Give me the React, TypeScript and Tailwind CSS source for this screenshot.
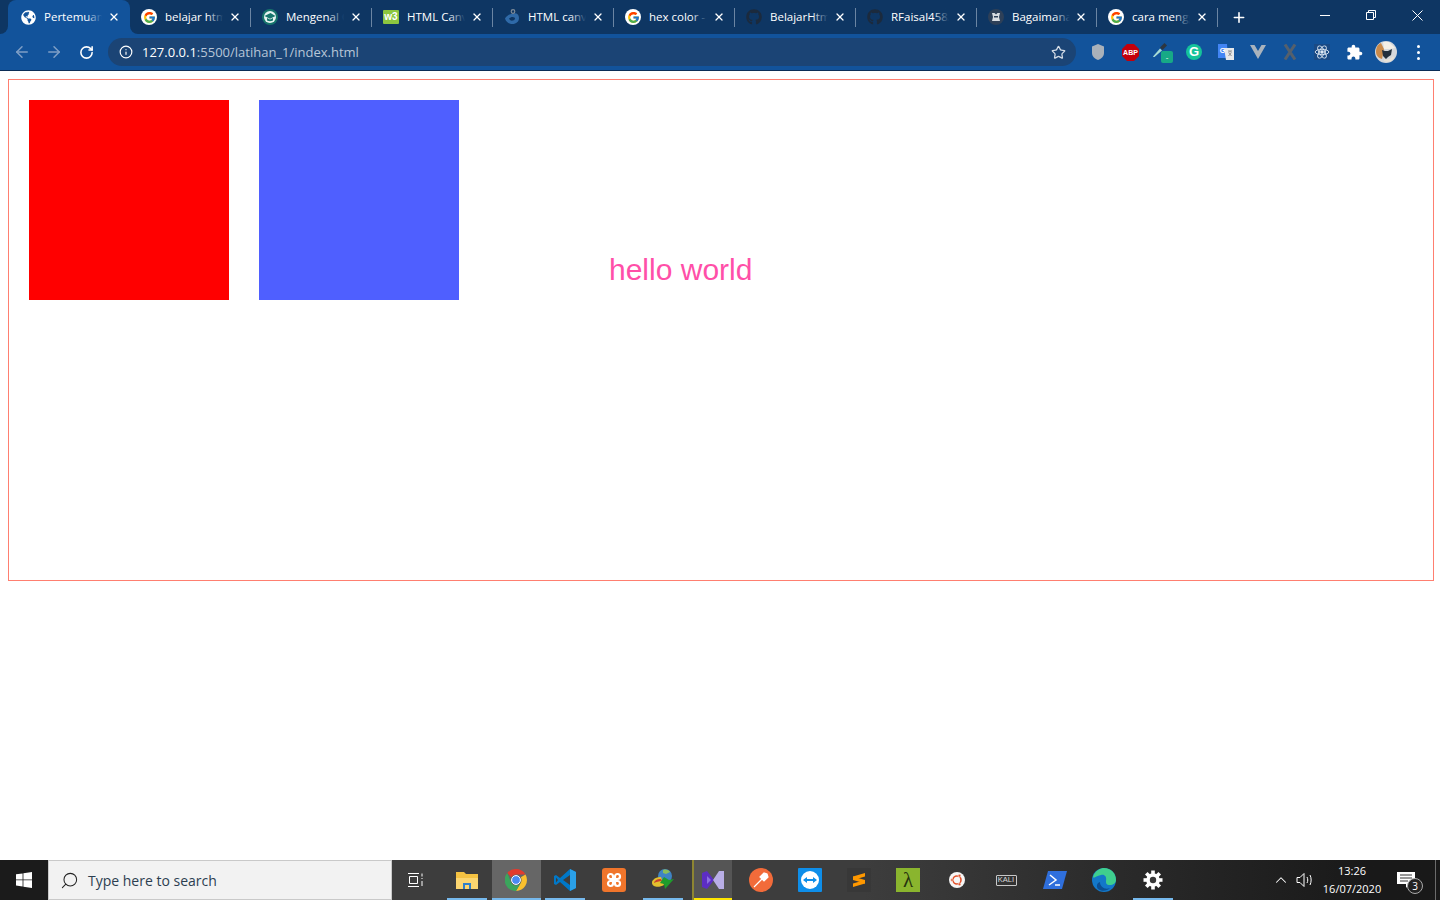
import type { ReactNode } from "react";
import { ArrowLeft, ArrowRight, ChevronUp, Info, Plus, RotateCw, Search, Star, X } from "lucide-react";
import { FcGoogle } from "react-icons/fc";
import { FaGithub, FaGlobeAmericas } from "react-icons/fa";

const uiFont = "font-['Open_Sans','Noto_Sans',sans-serif]";

function W3Icon() {
  return (
    <div className="flex h-[14px] w-4 items-center justify-center rounded-[1px] bg-[#8cc63f] font-['Liberation_Sans',sans-serif] text-[10px] leading-none font-bold text-white">
      w3
    </div>
  );
}

function GradIcon() {
  return (
    <svg width="16" height="16" viewBox="0 0 16 16">
      <circle cx="8" cy="8" r="8" fill="#17756c" />
      <circle cx="8" cy="8" r="6" fill="#e8f4f2" />
      <path d="M2.500 7 8.500 4 13.500 7 8 9.800z" fill="#17756c" />
      <path d="M5 9v2.400c1.900 1.100 4 1.100 6 0V9L8 10.600z" fill="#17756c" />
    </svg>
  );
}

function DrupalIcon() {
  return (
    <svg width="16" height="16" viewBox="0 0 16 16">
      <path d="M1 9.500C3 6 7 4.500 10.500 4.200 13 4 15 6 15 9c0 3.500-3 6-6.500 6S2 13 1 9.500z" fill="#2f6aa8" />
      <path d="M5 9.500c1.500-1.600 4-2 5.500-1 1 .8.5 2.500-1.500 3S5.500 11 5 9.500z" fill="#0e3663" />
      <circle cx="9" cy="2.500" r="1.800" fill="none" stroke="#7f8c99" strokeWidth="1.200" />
    </svg>
  );
}

function BearIcon() {
  return (
    <svg width="16" height="16" viewBox="0 0 16 16">
      <circle cx="8" cy="8" r="8" fill="#2e4058" />
      <path d="M4 4h2.500L8 5.500 9.500 4H12l-1 4 1 4H4l1-4z" fill="#d9dde2" />
      <rect x="6" y="7" width="4" height="1.500" fill="#2e4058" />
    </svg>
  );
}

function GoogleFav() {
  return (
    <div className="flex h-4 w-4 items-center justify-center rounded-full bg-white">
      <FcGoogle size={13} />
    </div>
  );
}

const tabs: { title: string; icon: ReactNode; narrow?: boolean }[] = [
  { title: "Pertemuan 2", icon: <FaGlobeAmericas size={15} color="#fff" /> },
  { title: "belajar html", icon: <GoogleFav /> },
  { title: "Mengenal Ca", icon: <GradIcon /> },
  { title: "HTML Canvas", icon: <W3Icon /> },
  { title: "HTML canvas", icon: <DrupalIcon /> },
  { title: "hex color - G", icon: <GoogleFav /> },
  { title: "BelajarHtml", icon: <FaGithub size={16} color="#1b2a3d" /> },
  { title: "RFaisal458/", icon: <FaGithub size={16} color="#1b2a3d" /> },
  { title: "Bagaimana", icon: <BearIcon />, narrow: true },
  { title: "cara mengg", icon: <GoogleFav /> },
];

function Tab({ title, icon, active, divider, narrow }: { title: string; icon: ReactNode; active: boolean; divider: boolean; narrow?: boolean }) {
  return (
    <div className={`relative flex h-[34px] shrink-0 items-center pl-3 ${active ? "-mr-px w-[122px] rounded-t-lg bg-[#12539b]" : narrow ? "w-[120px]" : "w-[121px]"}`}>
      {active && (
        <>
          <div className="absolute bottom-0 -left-2 h-2 w-2 bg-[#12539b]">
            <div className="h-2 w-2 rounded-br-lg bg-[#0e3663]" />
          </div>
          <div className="absolute -right-2 bottom-0 h-2 w-2 bg-[#12539b]">
            <div className="h-2 w-2 rounded-bl-lg bg-[#0e3663]" />
          </div>
        </>
      )}
      <div className="flex w-4 shrink-0 justify-center">{icon}</div>
      <div className="relative ml-2 w-[58px] overflow-hidden text-[11.5px] whitespace-nowrap text-white">
        {title}
        <div className={`absolute inset-y-0 right-0 w-4 bg-gradient-to-r from-transparent ${active ? "to-[#12539b]" : "to-[#0e3663]"}`} />
      </div>
      <X size={12} strokeWidth={2.6} color="#fff" className={`${narrow ? "ml-[5px]" : "ml-1.5"} shrink-0`} />
      {divider && <div className="absolute top-2 -right-px h-[19px] w-px bg-[#6b85a3]" />}
    </div>
  );
}

function TitleBar() {
  return (
    <div className="flex h-[34px] items-start bg-[#0e3663] pl-2">
      {tabs.map((t, i) => (
        <Tab key={i} title={t.title} icon={t.icon} narrow={t.narrow} active={i === 0} divider={i > 0} />
      ))}
      <div className="ml-[14px] flex h-[34px] w-4 items-center justify-center">
        <Plus size={17} strokeWidth={2.4} color="#fff" />
      </div>
      <div className="ml-auto flex h-[30px] items-center">
        <div className="flex w-[46px] justify-center">
          <div className="h-px w-2.5 bg-white" />
        </div>
        <div className="flex w-[46px] justify-center">
          <svg width="10" height="10" viewBox="0 0 10 10" fill="none" stroke="#fff">
            <path d="M.5 2.500h7v7h-7zM2.500 2.500v-2h7v7h-2" />
          </svg>
        </div>
        <div className="flex w-[46px] justify-center">
          <svg width="11" height="11" viewBox="0 0 11 11" stroke="#fff">
            <path d="M.5.5l10 10M10.500.5l-10 10" />
          </svg>
        </div>
      </div>
    </div>
  );
}

function Ext({ children }: { children: ReactNode }) {
  return <div className="flex h-9 w-8 items-center justify-center">{children}</div>;
}

function ExtensionIcons() {
  return (
    <div className="flex">
      <Ext>
        <svg width="12" height="16" viewBox="0 0 12 16">
          <path d="M6 0l6 2.500V9c0 3.500-3 6-6 7-3-1-6-3.500-6-7V2.500z" fill="#a9b1ba" />
        </svg>
      </Ext>
      <Ext>
        <svg width="17" height="17" viewBox="0 0 17 17">
          <path d="M5 0h7l5 5v7l-5 5H5l-5-5V5z" fill="#c4000b" />
          <text x="8.500" y="11" textAnchor="middle" fontSize="7" fontWeight="700" fill="#fff" fontFamily="Liberation Sans">ABP</text>
        </svg>
      </Ext>
      <Ext>
        <div className="relative h-5 w-5">
          <svg width="16" height="16" viewBox="0 0 16 16" className="absolute top-0 left-0">
            <path d="M1.500 15 1 14.500 8 6.500 10 8.500 2.500 15z" fill="#a8dcd5" />
            <path d="M8 5.500 10.500 3 12.500 1 15 3.500 13 5.500 10.500 8z" fill="#2d3640" />
          </svg>
          <div className="absolute top-[9px] left-[9px] flex h-3 w-3 items-center justify-center rounded-[2px] bg-[#17a986] text-[8px] leading-none text-white">-</div>
        </div>
      </Ext>
      <Ext>
        <div className="flex h-4 w-4 items-center justify-center rounded-full bg-[#15c39a] font-['Liberation_Sans',sans-serif] text-[13px] font-bold text-white">G</div>
      </Ext>
      <Ext>
        <svg width="16" height="16" viewBox="0 0 16 16">
          <path d="M0 0h9l1 14H0z" fill="#4285f4" />
          <path d="M6 4h10v12H8z" fill="#e6e8ea" />
          <path d="M10 7h4M12 7v1.500M10.500 12l3-3.500M13.500 12l-3-3.500" stroke="#777" strokeWidth=".8" fill="none" />
          <text x="4.500" y="9" textAnchor="middle" fontSize="7" fontWeight="700" fill="#fff" fontFamily="Liberation Sans">G</text>
        </svg>
      </Ext>
      <Ext>
        <svg width="16" height="14" viewBox="0 0 16 14">
          <path d="M0 0h4.500L8 6l3.500-6H16L8 14z" fill="#a9b3bd" />
        </svg>
      </Ext>
      <Ext>
        <svg width="14" height="16" viewBox="0 0 14 16" stroke="#55606c" strokeWidth="3" fill="none">
          <path d="M2 .5l10 15M12 .5l-10 15" />
        </svg>
      </Ext>
      <Ext>
        <div className="flex h-4 w-4 items-center justify-center bg-[#1a4a85]">
          <svg width="16" height="16" viewBox="-8 -8 16 16" fill="none" stroke="#dfe8f2" strokeWidth=".9">
            <ellipse rx="6.800" ry="2.700" />
            <ellipse rx="6.800" ry="2.700" transform="rotate(60)" />
            <ellipse rx="6.800" ry="2.700" transform="rotate(120)" />
            <circle r="1.300" fill="#dfe8f2" />
          </svg>
        </div>
      </Ext>
      <Ext>
        <svg width="17" height="17" viewBox="0 0 24 24" fill="#fff">
          <path d="M20.500 11H19V7c0-1.100-.9-2-2-2h-4V3.500C13 2.120 11.880 1 10.500 1S8 2.120 8 3.500V5H4c-1.100 0-1.990.9-1.990 2v3.800H3.500c1.490 0 2.700 1.210 2.700 2.700s-1.210 2.700-2.700 2.700H2V20c0 1.100.9 2 2 2h3.800v-1.500c0-1.490 1.210-2.700 2.700-2.700 1.490 0 2.700 1.210 2.700 2.700V22H17c1.100 0 2-.9 2-2v-4h1.500c1.380 0 2.500-1.120 2.500-2.500S21.880 11 20.500 11z" />
        </svg>
      </Ext>
      <Ext>
        <svg width="22" height="22" viewBox="0 0 22 22">
          <circle cx="11" cy="11" r="11" fill="#d5d8dc" />
          <path d="M1 11C1 6 3 3 6 2l3 6-2 10C3 17 1 14 1 11z" fill="#c98a4a" />
          <path d="M8 1h6l6 6-5 1H9z" fill="#f4efe6" />
          <path d="M7 9l3 1h3l4-2-1 6-3 2-2 2-3-3z" fill="#23303d" />
          <path d="M9 18c2 1 6 1 9-3l1 2c-2 3-6 5-10 3z" fill="#e9e2d6" />
        </svg>
      </Ext>
      <Ext>
        <div className="flex flex-col gap-[3px]">
          <div className="h-[3px] w-[3px] rounded-full bg-white" />
          <div className="h-[3px] w-[3px] rounded-full bg-white" />
          <div className="h-[3px] w-[3px] rounded-full bg-white" />
        </div>
      </Ext>
    </div>
  );
}

function Toolbar() {
  return (
    <div className="flex h-[37px] items-start border-b border-[#0b2c55] bg-[#12539b] pl-1.5">
      <Ext>
        <ArrowLeft size={18} color="#7f9fc6" />
      </Ext>
      <Ext>
        <ArrowRight size={18} color="#7f9fc6" />
      </Ext>
      <Ext>
        <RotateCw size={15} strokeWidth={2.5} color="#fff" />
      </Ext>
      <div className="mt-1 ml-1.5 flex h-7 w-[968px] items-center rounded-full bg-[#1b4475] pl-[11px]">
        <Info size={14} color="#fff" />
        <div className="mt-px ml-[9px] text-[13px] text-[#b7c6d8]">
          <span className="text-white">127.0.0.1</span>:5500/latihan_1/index.html
        </div>
        <Star size={15} color="#d5dde7" className="mr-[10px] ml-auto" />
      </div>
      <div className="ml-1.5">
        <ExtensionIcons />
      </div>
    </div>
  );
}

function Canvas() {
  return (
    <div className="mt-2 mr-1.5 ml-2 flex h-[502px] items-start border border-[#ff7f70] p-5">
      <div className="h-[200px] w-[200px] bg-[#ff0000]" />
      <div className="ml-[30px] h-[200px] w-[200px] bg-[#4f5fff]" />
      <div className="mt-[148px] ml-[150px] font-['Liberation_Sans',sans-serif] text-[30px] leading-[44px] text-[#ff4fa8]">hello world</div>
    </div>
  );
}

function ChromeIcon() {
  return (
    <svg width="22" height="22" viewBox="0 0 22 22">
      <path d="M11 0a11 11 0 0 1 9.500 5.500H11a5.500 5.500 0 0 0-4.800 2.800L2.300 3.900A11 11 0 0 1 11 0z" fill="#e33b2e" />
      <path d="M20.500 5.500A11 11 0 0 1 11 22l4.800-8.200a5.500 5.500 0 0 0 0-5.600z" fill="#fbc02d" />
      <path d="M2.300 3.900 6.200 13.700A5.500 5.500 0 0 0 15.800 13.800L11 22A11 11 0 0 1 2.300 3.900z" fill="#3ba55c" />
      <circle cx="11" cy="11" r="4.400" fill="#4a8af4" stroke="#fff" strokeWidth="1" />
    </svg>
  );
}

function TaskItem({ children, line, active }: { children: ReactNode; line?: boolean; active?: boolean }) {
  return (
    <div className={`relative flex h-10 w-[49px] shrink-0 items-center justify-center ${active ? "bg-[#666666]" : ""}`}>
      {children}
      {line && <div className={`absolute bottom-0 h-0.5 bg-[#76b9ed] ${active ? "inset-x-0" : "w-10"}`} />}
    </div>
  );
}

function Taskbar() {
  return (
    <div className={`flex h-10 items-stretch bg-gradient-to-r from-[#3d3d3d] from-60% to-[#191919] to-95% ${uiFont}`}>
      <div className="flex w-12 items-center justify-center bg-[#1b1b1b]">
        <svg width="16" height="16" viewBox="0 0 16 16" fill="#fff">
          <path d="M0 2.300 6.600 1.400V7.500H0zM7.400 1.300 16 0V7.500H7.400zM0 8.300H6.600V14.500L0 13.600zM7.400 8.300H16V16L7.400 14.700z" />
        </svg>
      </div>
      <div className="flex w-[344px] items-center border border-[#c9c9c9] bg-[#f2f2f2] pl-[11px]">
        <Search size={19} strokeWidth={1.3} color="#222" className="-scale-x-100" />
        <span className="ml-[9px] text-[14px] text-[#2c3e50]">Type here to search</span>
      </div>
      <div className="flex w-[50.5px] items-center justify-center pr-0.5">
        <svg width="16" height="14" viewBox="0 0 16 14" fill="none" stroke="#fff">
          <path d="M0 .5h11M0 13.500h11M1.500 3.500h8v7h-8zM14 .5v3M14 5v1M14 8v5" />
        </svg>
      </div>
      <TaskItem line>
        <svg width="22" height="20" viewBox="0 0 22 20">
          <path d="M0 2h8l2 2h12v14H0z" fill="#f5c242" />
          <path d="M0 8h22v11H0z" fill="#fcd670" />
          <path d="M7 13h8v6H7z" fill="#2f7fc9" />
          <path d="M9 15h4v4H9z" fill="#fcd670" />
        </svg>
      </TaskItem>
      <TaskItem line active>
        <ChromeIcon />
      </TaskItem>
      <TaskItem line>
        <svg width="24" height="24" viewBox="0 0 24 24">
          <path d="M17 1l6 3v16l-6 3L7 14l-4 3-2-1v-8l2-1 4 3z" fill="#0078c8" />
          <path d="M17 1l6 3v16l-6 3z" fill="#2aa0e8" />
          <path d="M17 7v10l-7-5z" fill="#3d3d3d" />
          <path d="M3 9.500V14.500L5 12z" fill="#3d3d3d" />
        </svg>
      </TaskItem>
      <TaskItem>
        <div className="flex h-6 w-6 items-center justify-center rounded-[3px] bg-[#f0752b]">
          <svg width="18" height="18" viewBox="0 0 18 18" fill="none" stroke="#fff" strokeWidth="2.200">
            <path d="M3 5.500a2.500 2.500 0 0 1 5 0v7a2.500 2.500 0 0 1-5 0 2.500 2.500 0 0 1 2.500-2.500h7a2.500 2.500 0 0 1 2.500 2.500 2.500 2.500 0 0 1-5 0v-7a2.500 2.500 0 0 1 5 0A2.500 2.500 0 0 1 12.500 8h-7A2.500 2.500 0 0 1 3 5.500z" />
          </svg>
        </div>
      </TaskItem>
      <TaskItem line>
        <svg width="24" height="24" viewBox="0 0 24 24">
          <circle cx="14" cy="8" r="7" fill="#3f84c4" />
          <path d="M12 2c3-1 6 0 7 2l-4 2-3-1z" fill="#8cbf5a" />
          <path d="M1 15a8 6 0 0 1 9-6l3 8c-5 3-12 2-12-2z" fill="#e3c02e" />
          <path d="M3 15a6 4 0 0 1 7-4l1 2c-3 0-6 1-8 2z" fill="#c9402e" />
          <path d="M13 9l5 3 5-1-9 10-1-5-4-1z" fill="#1f9c2c" />
        </svg>
      </TaskItem>
      <div className="relative mx-[4.500px] flex h-10 w-10 shrink-0 items-center justify-center border-l-2 border-[#8d8532] bg-[#555555]">
        <svg width="22" height="20" viewBox="0 0 22 20">
          <path d="M0 3 L5 1 L12 10 L5 19 L0 17z" fill="#5c2dc4" />
          <path d="M22 1v18l-5 0-6-9 6-9z" fill="#b9aee6" />
          <path d="M5 6v8l4-4z" fill="#8c6fe0" />
        </svg>
        <div className="absolute inset-x-0 bottom-0 h-0.5 bg-[#ffe600]" />
      </div>
      <TaskItem>
        <svg width="24" height="24" viewBox="0 0 24 24">
          <circle cx="12" cy="12" r="12" fill="#f26b3a" />
          <path d="M5 19l8-8M11 9l4-4 3 1 1 3-4 4z" stroke="#fff" strokeWidth="1.200" fill="#fff" />
        </svg>
      </TaskItem>
      <TaskItem>
        <div className="flex h-6 w-6 items-center justify-center rounded-[1px] bg-[#0e8ee9]">
          <svg width="20" height="20" viewBox="0 0 20 20">
            <circle cx="10" cy="10" r="9" fill="#fff" />
            <path d="M3 10l4-3v2h6V7l4 3-4 3v-2H7v2z" fill="#0e8ee9" />
          </svg>
        </div>
      </TaskItem>
      <TaskItem>
        <div className="flex h-6 w-6 items-center justify-center bg-[#383838]">
          <svg width="14" height="16" viewBox="0 0 14 16" fill="#ff9800">
            <path d="M13 1v3.500L1 8V4.500z" />
            <path d="M1 11.500 13 8v3.500L1 15z" />
            <path d="M1 4.500 13 8v3.500L1 8z" />
          </svg>
        </div>
      </TaskItem>
      <TaskItem>
        <div className="flex h-6 w-6 items-center justify-center bg-[#8ab52e] font-['Liberation_Serif',serif] text-[21px] leading-none text-[#26330f]">λ</div>
      </TaskItem>
      <TaskItem>
        <svg width="16" height="16" viewBox="-8 -8 16 16">
          <circle r="8" fill="#f6f6f6" />
          <circle r="4" fill="none" stroke="#e2512a" strokeWidth="1.600" />
          <circle cx="-5" cy="0" r="1.400" fill="#e2512a" stroke="#f6f6f6" strokeWidth=".6" />
          <circle cx="2.500" cy="-4.300" r="1.400" fill="#e2512a" stroke="#f6f6f6" strokeWidth=".6" />
          <circle cx="2.500" cy="4.300" r="1.400" fill="#e2512a" stroke="#f6f6f6" strokeWidth=".6" />
        </svg>
      </TaskItem>
      <TaskItem>
        <div className="flex h-[11px] w-[21px] items-center justify-center rounded-[1px] border border-[#c8c8c8] font-['Liberation_Sans',sans-serif] text-[7.500px] leading-none text-[#d8d8d8]">KALI</div>
      </TaskItem>
      <TaskItem>
        <svg width="24" height="18" viewBox="0 0 24 18">
          <path d="M5 0h19l-5 18H0z" fill="#2f6fdc" />
          <path d="M7 4l6 5-7 5M12 14h5" stroke="#fff" strokeWidth="1.500" fill="none" />
        </svg>
      </TaskItem>
      <TaskItem>
        <svg width="24" height="24" viewBox="0 0 24 24">
          <circle cx="12" cy="12" r="12" fill="#1378c9" />
          <path d="M1 9C3 2 9 0 12 0c7 0 12 5 12 12 0 3-3 5-6 5-4 0-4-2-4-4 1-5-2-7-5-6-5 1-7 4-8 2z" fill="#3fcf8e" />
          <path d="M8 14c0 5 5 8 10 6-3 3-8 4-12 1-2-3-1-6 2-7z" fill="#0c4f93" />
        </svg>
      </TaskItem>
      <TaskItem line>
        <svg width="20" height="20" viewBox="-10 -10 20 20" fill="#fff">
          <circle r="6.800" />
          {[0, 45, 90, 135, 180, 225, 270, 315].map((a) => (
            <rect key={a} x="-1.800" y="-9.500" width="3.600" height="4" transform={`rotate(${a})`} />
          ))}
          <circle r="3.200" fill="#383838" />
        </svg>
      </TaskItem>
      <div className="ml-auto flex items-center text-white">
        <ChevronUp size={18} strokeWidth={1.4} />
        <svg width="18" height="16" viewBox="0 0 18 16" fill="none" stroke="#fff" className="ml-1.5">
          <path d="M1 5.500h3l4-4v13l-4-4H1zM11 5c1 2 1 4 0 6M14 3c1.500 3 1.500 7 0 10" />
        </svg>
        <div className="ml-[5px] flex w-[66px] flex-col items-center text-[11px] leading-[18px]">
          <span>13:26</span>
          <span>16/07/2020</span>
        </div>
        <div className="relative ml-[3px] h-10 w-10">
          <svg width="18" height="16" viewBox="0 0 18 16" fill="#fff" className="absolute top-3 left-[9px]">
            <path d="M0 0h18v12h-6l-3 4v-4H0z" />
            <path d="M3 3h12M3 6h12M3 9h8" stroke="#333" />
          </svg>
          <div className="absolute top-[18px] left-[19px] flex h-4 w-4 items-center justify-center rounded-full border border-[#aaa] bg-[#222] text-[10px] leading-none">3</div>
        </div>
        <div className="ml-[7px] h-10 w-[5px] border-l border-[#6b6b6b]" />
      </div>
    </div>
  );
}

export default function App() {
  return (
    <div className={`flex h-screen flex-col overflow-hidden bg-white ${uiFont}`}>
      <TitleBar />
      <Toolbar />
      <div className="flex-1">
        <Canvas />
      </div>
      <Taskbar />
    </div>
  );
}
